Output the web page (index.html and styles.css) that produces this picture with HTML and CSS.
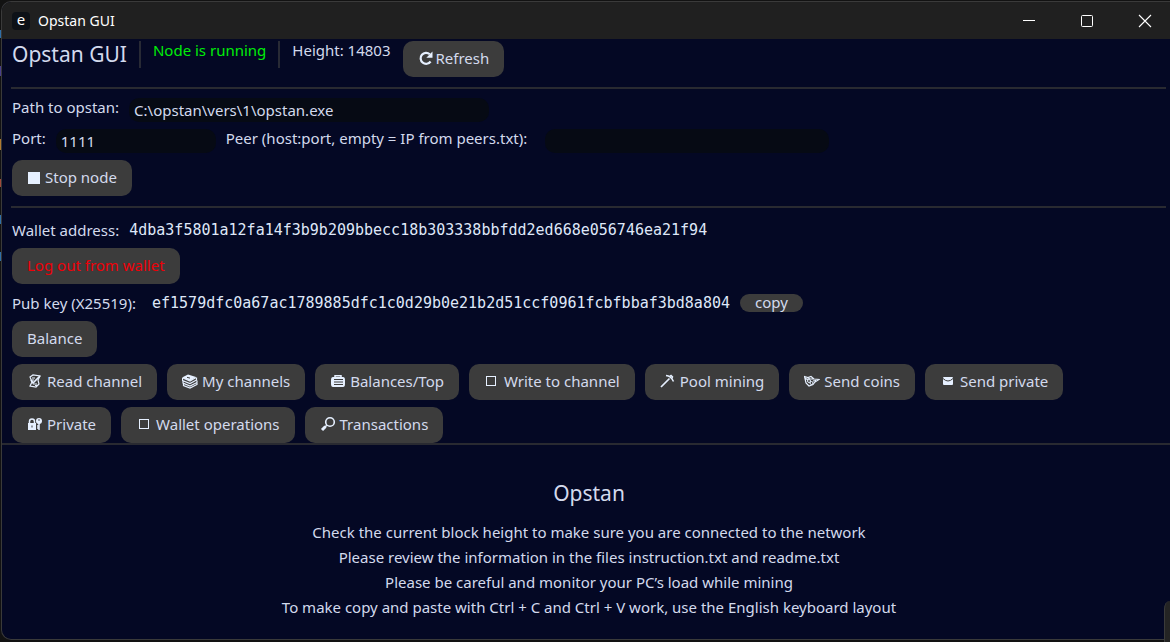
FILE: index.html
```html
<!DOCTYPE html>
<html lang="en">
<head>
<meta charset="utf-8">
<title>Opstan GUI</title>
<link rel="stylesheet" href="styles.css">
</head>
<body>
<div class="window">
  <div class="titlebar">
    <span class="app-icon">e</span>
    <span class="app-title">Opstan GUI</span>
    <div class="controls">
      <button class="control" aria-label="Minimize"><svg width="14" height="14" viewBox="0 0 14 14"><path d="M1 6.5h12" stroke="#fff"/></svg></button>
      <button class="control" aria-label="Maximize"><svg width="14" height="14" viewBox="0 0 14 14"><rect x="1.5" y="1.5" width="11" height="11" rx="1" fill="none" stroke="#fff"/></svg></button>
      <button class="control" aria-label="Close"><svg width="14" height="14" viewBox="0 0 14 14"><path d="M1 1l12 12M13 1L1 13" stroke="#fff" stroke-width="1.1"/></svg></button>
    </div>
  </div>

  <header class="panel header">
    <h1 class="brand">Opstan GUI</h1>
    <span class="divider"></span>
    <span class="status">Node is running</span>
    <span class="divider"></span>
    <span class="height">Height: 14803</span>
    <button class="btn btn-tight"><svg class="icon" viewBox="0 0 16 16"><path d="M11.800 4.200A5.500 5.500 0 1 0 12.600 11.500" fill="none" stroke="currentColor" stroke-width="2.200"/><path d="M14.500 1.500v6.200H8.300z" fill="currentColor"/></svg>Refresh</button>
  </header>

  <main class="panel main">
    <hr class="rule">
    <section class="stack">
      <div class="row">
        <label for="path">Path to opstan:</label>
        <input id="path" class="field field-path" type="text" value="C:\opstan\vers\1\opstan.exe">
      </div>
      <div class="row">
        <label for="port">Port:</label>
        <input id="port" class="field field-port" type="text" value="1111">
        <label class="peer-label" for="peer">Peer (host:port, empty = IP from peers.txt):</label>
        <input id="peer" class="field field-peer" type="text">
      </div>
      <div class="row">
        <button class="btn btn-tight"><svg class="icon" viewBox="0 0 16 16"><rect x="1" y="3" width="12" height="12" fill="currentColor"/></svg>Stop node</button>
      </div>
    </section>
    <hr class="rule">
    <section class="stack wallet">
      <div class="row info">
        <span>Wallet address:</span>
        <code class="hash">4dba3f5801a12fa14f3b9b209bbecc18b303338bbfdd2ed668e056746ea21f94</code>
      </div>
      <div class="row"><button class="btn btn-danger">Log out from wallet</button></div>
      <div class="row info">
        <span class="key-label">Pub key (X25519):</span>
        <code class="hash">ef1579dfc0a67ac1789885dfc1c0d29b0e21b2d51ccf0961fcbfbbaf3bd8a804</code>
        <button class="btn btn-copy">copy</button>
      </div>
      <div class="row"><button class="btn">Balance</button></div>
      <nav class="actions">
        <button class="btn"><svg class="icon" viewBox="0 0 16 16" fill="none" stroke="currentColor"><path d="M3 4l3-2 7 1-2 4 1 4-3 3-6-1 2-4z" stroke-width="1.200"/><path d="M5 5h3M5 7h2M6 11h4M8 12.500h2"/><path d="M13 3L6 10l-2-3" stroke-width="1.700"/></svg>Read channel</button>
        <button class="btn"><svg class="icon" viewBox="0 0 16 16"><path d="M0 4.500L6 1.500l8 2.500-6 4z" fill="currentColor"/><path d="M5 4.300l3 .8" stroke="#3c3c3c"/><path d="M.5 5v2.500l7.500 3 6.500-3.500V4.500M1 8v2l7 3 7-3.500V7.500M1.500 10.500v2L8 15l7-3.500V10M1 5l7 3 6-3.500" fill="none" stroke="currentColor" stroke-width="1.200"/></svg>My channels</button>
        <button class="btn"><svg class="icon" viewBox="0 0 16 16"><path d="M5 5V2.800h6V5" fill="none" stroke="currentColor" stroke-width="1.500"/><path d="M3 4h10q2 0 2 3v4q0 3-2 3H3q-2 0-2-3V7q0-3 2-3z" fill="currentColor"/><path d="M4 6.500h9M4 9h9M4 11.500h9" stroke="#3c3c3c"/></svg>Balances/Top</button>
        <button class="btn"><svg class="icon" viewBox="0 0 16 16"><rect x="2.500" y="3.500" width="9" height="9" fill="none" stroke="currentColor"/></svg>Write to channel</button>
        <button class="btn"><svg class="icon" viewBox="0 0 16 16" fill="none" stroke="currentColor"><path d="M1 14L9.500 5.500" stroke-width="1.700"/><path d="M6 2.500Q11 3 13.500 8.500M9 4l2-1.500 1.500 1.500-1 2" stroke-width="1.500"/></svg>Pool mining</button>
        <button class="btn"><svg class="icon" viewBox="0 0 16 16" fill="none" stroke="currentColor"><path d="M.5 3.500l3.500 1 3-1 3 2.500 5 .5-4 2.500-2 2.500-4 1.500-3-3zM1 5l3 2M3 4.500l3 1.500 4 0M9 8l3-.5" stroke-width="1.200"/><circle cx="5" cy="8" r="1.500"/><circle cx="7.500" cy="10" r="1.500"/></svg>Send coins</button>
        <button class="btn"><svg class="icon" viewBox="0 0 16 16"><rect x="3" y="4" width="10" height="8" rx="1" fill="currentColor"/><path d="M3 5.500Q8 10.500 13 5.500" fill="none" stroke="#3c3c3c"/></svg>Send private</button>
        <button class="btn"><svg class="icon" viewBox="0 0 16 16"><path d="M1 7h8v7H1z" fill="currentColor"/><path d="M2.500 8V5.500a2.500 2.500 0 0 1 5 0V8" fill="none" stroke="currentColor" stroke-width="1.500"/><circle cx="12" cy="5" r="3" fill="currentColor"/><path d="M12 6v8M12 12h-2M12 10h-2" stroke="currentColor" stroke-width="1.500"/><circle cx="12" cy="4" r=".8" fill="#3c3c3c"/><path d="M5 9.500v2" stroke="#3c3c3c"/></svg>Private</button>
        <button class="btn"><svg class="icon" viewBox="0 0 16 16"><rect x="3.500" y="3.500" width="9" height="9" fill="none" stroke="currentColor"/></svg>Wallet operations</button>
        <button class="btn"><svg class="icon" viewBox="0 0 16 16" fill="none" stroke="currentColor"><circle cx="10" cy="6" r="4.300" stroke-width="1.600"/><path d="M6.800 9.200L5 11" stroke-width="1.600"/><path d="M5.500 10.500L2 14" stroke-width="3"/></svg>Transactions</button>
      </nav>
    </section>
  </main>

  <section class="welcome">
    <h2 class="welcome-title">Opstan</h2>
    <p>Check the current block height to make sure you are connected to the network</p>
    <p>Please review the information in the files instruction.txt and readme.txt</p>
    <p>Please be careful and monitor your PC’s load while mining</p>
    <p>To make copy and paste with Ctrl + C and Ctrl + V work, use the English keyboard layout</p>
  </section>
</div>
<div class="behind-corner"></div>
</body>
</html>
```
FILE: styles.css
```css
* { box-sizing: border-box; }

body {
  margin: 0;
  min-height: 100vh;
  padding: 1px 0 2px 1px;
  display: flex;
  /* slivers of the editor window showing past the left edge */
  background:
    linear-gradient(#2f6fa8, #2f6fa8) 0 30px / 1px 8px no-repeat,
    linear-gradient(#4a3f8c, #4a3f8c) 0 66px / 1px 10px no-repeat,
    linear-gradient(#b07a30, #b07a30) 0 139px / 1px 11px no-repeat,
    linear-gradient(#a04a3a, #a04a3a) 0 179px / 1px 8px no-repeat,
    linear-gradient(#2f6fa8, #2f6fa8) 0 215px / 1px 9px no-repeat,
    linear-gradient(#2f6fa8, #2f6fa8) 0 252px / 1px 9px no-repeat,
    #121212;
  color: #d3daed;
  font: 15px/18px "Noto Sans", "Open Sans", sans-serif;
  overflow: hidden;
}

button, input { font: inherit; color: inherit; }

.window {
  flex: 1;
  min-width: 0;
  display: flex;
  flex-direction: column;
  background: #040824;
  border: 1px solid #3a3a3a;
  border-right: 0;
  border-radius: 10px 0 0 10px;
  overflow: hidden;
}

.titlebar {
  display: flex;
  align-items: center;
  height: 37px;
  padding-left: 10px;
  background: #202020;
  color: #fff;
}

.app-icon {
  width: 18px;
  height: 18px;
  margin-right: 8px;
  border-radius: 4px;
  background: #0d1117;
  line-height: 15px;
  text-align: center;
}

.app-title { font-size: 14px; }

.controls {
  display: flex;
  gap: 8px;
  margin-left: auto;
}

.control {
  width: 50px;
  height: 37px;
  padding: 0;
  display: grid;
  place-items: center;
  border: 0;
  background: none;
}

.panel { padding: 0 4px 0 10px; }

.header {
  display: flex;
  align-items: flex-start;
  padding-top: 2px;
}

.brand {
  margin: 0;
  font-size: 21px;
  font-weight: 400;
  line-height: 26px;
}

.divider {
  width: 2px;
  height: 27px;
  margin: 0 12px;
  background: #282a35;
}

.status { color: #00ee08; }

.height { margin-right: 12px; }

.rule {
  height: 2px;
  margin: 10px 0 9px -1px;
  border: 0;
  background: #292a31;
}

.stack {
  display: flex;
  flex-direction: column;
  gap: 7px;
}

.wallet { padding-top: 1px; }

.row {
  display: flex;
  align-items: flex-start;
  gap: 10px;
}

.info {
  height: 23px;
  align-items: center;
}

.field {
  height: 24px;
  min-width: 0;
  padding: 0 5px;
  border: 0;
  border-radius: 10px;
  background: #060a14;
}

.field-path { width: 360px; }
.field-port { width: 160px; }
.field-peer { width: 284px; }

.peer-label { min-width: 309px; }
.key-label { min-width: 130px; }

.hash {
  font: 15px/18px "DejaVu Sans Mono", monospace;
  color: #dfe7f8;
}

.btn {
  display: inline-flex;
  align-items: center;
  gap: 4px;
  height: 36px;
  padding: 0 15px 2px;
  border: 0;
  border-radius: 10px;
  background: #3c3c3c;
  white-space: nowrap;
}

.btn-tight { gap: 2px; }

.icon {
  width: 16px;
  height: 16px;
  flex: none;
  color: #e6f0ff;
}

.btn-danger { color: #ee0008; }

.btn-copy {
  height: 18px;
  padding-bottom: 1px;
}

.actions {
  display: flex;
  flex-wrap: wrap;
  gap: 7px 10px;
}

.welcome {
  flex: 1;
  padding: 32px 4px 0 10px;
  border-top: 2px solid #292a31;
  text-align: center;
}

.welcome-title {
  margin: 0 0 11px;
  font-size: 21px;
  font-weight: 400;
  line-height: 32px;
}

.welcome p {
  margin: 0;
  line-height: 25px;
}

.behind-corner {
  position: absolute;
  right: 0;
  bottom: 0;
  width: 6px;
  height: 41px;
  border-left: 1px solid #3a3a3a;
  border-top-left-radius: 6px 8px;
  background: #242424;
}
```
